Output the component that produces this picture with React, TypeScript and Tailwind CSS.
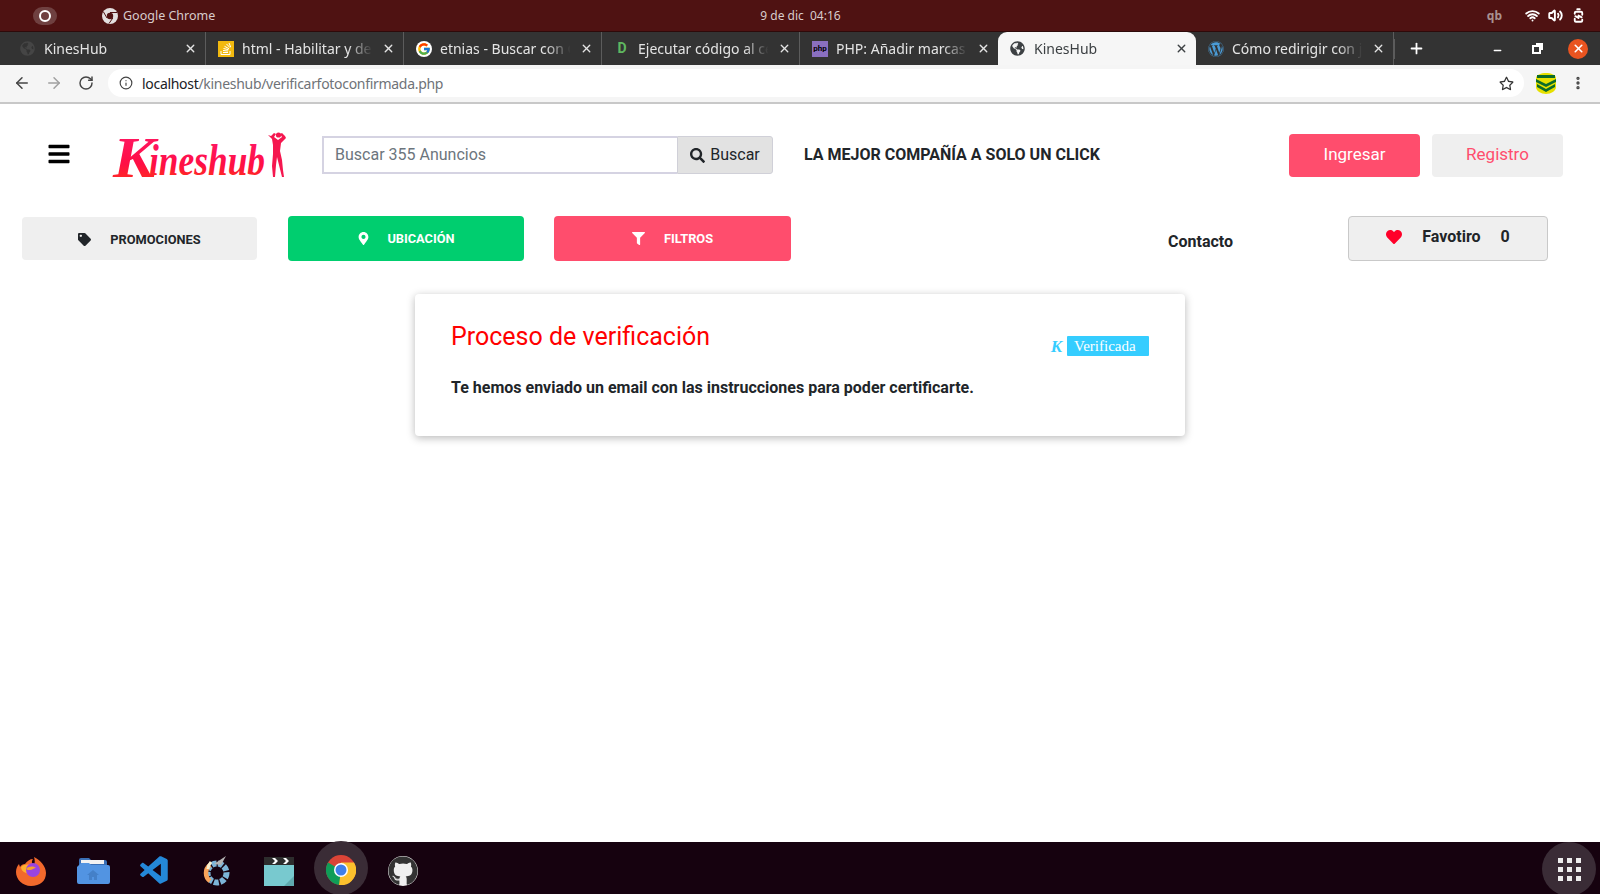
import React from "react";
import { FaBars, FaFilter, FaGlobeAmericas, FaHeart, FaMapMarkerAlt, FaSearch, FaTag, FaWordpress, FaGithub, FaRegStar } from "react-icons/fa";
import { FcGoogle } from "react-icons/fc";
import { VscVscode } from "react-icons/vsc";
import { ArrowLeft, ArrowRight, RotateCw, Info, X, Plus, Minus, EllipsisVertical, Volume2, Wifi, BatteryCharging } from "lucide-react";

const ubuntu = "font-['Noto_Sans',sans-serif]";

const tabs = [
  { title: "KinesHub", icon: <FaGlobeAmericas className="text-[15px] text-[#454545]" /> },
  { title: "html - Habilitar y desha", icon: <StackIcon /> },
  { title: "etnias - Buscar con Goo", icon: <span className="flex h-4 w-4 items-center justify-center rounded-full bg-white"><FcGoogle className="text-[14px]" /></span> },
  { title: "Ejecutar código al cerra", icon: <span className="w-4 text-center text-[14px] font-bold text-[#5fb760]">D</span> },
  { title: "PHP: Añadir marcas de a", icon: <span className="flex h-4 w-4 items-center justify-center bg-[#8a6fc0] text-[8px] font-bold text-black">php</span> },
  { title: "KinesHub", icon: <FaGlobeAmericas className="text-[15px] text-[#3c4043]" />, active: true },
  { title: "Cómo redirigir con jQue", icon: <FaWordpress className="text-[16px] text-[#4a9bd6]" /> },
];

function StackIcon() {
  return (
    <svg width="16" height="16" viewBox="0 0 16 16">
      <rect width="16" height="16" fill="#f2b90f" />
      <path d="M3 10v3.5h9V10M5 11.5h5M5 9.5l5 .5M5.5 7.5l5 1.2M6.5 5.3l4.5 2.4M8.5 3l3.5 3.6M11 2l1.7 4" stroke="#fff" strokeWidth="1" fill="none" />
    </svg>
  );
}

function Tab({ title, icon, active, last }: { title: string; icon: React.ReactNode; active?: boolean; last?: boolean }) {
  return (
    <div className={`flex h-[33px] w-[198px] shrink-0 items-center pl-[12px] pr-[8px] ${active ? "rounded-t-[9px] bg-[#f6f6f6] text-[#3c4043]" : "text-[#e4e4e4]"} ${active || last ? "" : "border-r border-[#5c5c5c]"}`}>
      <div className="flex w-[24px] shrink-0 items-center">{icon}</div>
      <span className={`${ubuntu} min-w-0 flex-1 overflow-hidden whitespace-nowrap text-[14px] [mask-image:linear-gradient(to_right,black_78%,transparent_96%)]`}>{title}</span>
      <X size={13} strokeWidth={2.5} className="ml-1 shrink-0" />
    </div>
  );
}

function Logo() {
  return (
    <svg width="178" height="52" viewBox="0 0 178 52" className="shrink-0">
      <defs>
        <linearGradient id="kh" x1="0" y1="0" x2="0" y2="1">
          <stop offset="0" stopColor="#ff1a6b" />
          <stop offset="0.6" stopColor="#ff0f45" />
          <stop offset="1" stopColor="#ff3a10" />
        </linearGradient>
      </defs>
      <text x="2" y="48" fill="url(#kh)" fontFamily="'Liberation Serif', serif" fontStyle="italic" fontWeight="700" fontSize="58" textLength="42" lengthAdjust="spacingAndGlyphs">K</text>
      <text x="0" y="0" transform="translate(38 46) scale(1 1.35)" fill="url(#kh)" fontFamily="'Liberation Serif', serif" fontStyle="italic" fontWeight="700" fontSize="33" textLength="116" lengthAdjust="spacingAndGlyphs">ineshub</text>
      <g fill="#f5174f">
        <path d="M160 7l3-3 2 1-2 3 4 3 4-3-2-3 2-1 3 3 1 2-5 5-1 8 2 9 1 10 1 7h-2l-3-12-2-8-1 8-1 12h-2l-1-11 1-12 0-9-1-6-4-4z" />
        <circle cx="167.500" cy="6" r="2.600" />
      </g>
    </svg>
  );
}

function Kmark() {
  return <span className="font-['Liberation_Serif',serif] text-[17px] font-bold italic leading-none text-[#35cdff]">K</span>;
}

function ChromeIcon() {
  return (
    <svg width="30" height="30" viewBox="0 0 30 30">
      <circle cx="15" cy="15" r="15" fill="#db4437" />
      <path d="M15 15L2 7.500A15 15 0 0 0 15 30l6-10z" fill="#0f9d58" />
      <path d="M15 15l-2 15a15 15 0 0 0 15-22.500H15z" fill="#fbc02d" />
      <circle cx="15" cy="15" r="7" fill="#fff" />
      <circle cx="15" cy="15" r="5.500" fill="#3f7fe8" />
    </svg>
  );
}

function FirefoxIcon() {
  return (
    <svg width="32" height="32" viewBox="0 0 32 32">
      <path d="M16 31C7.500 31 1 24.500 1 17c0-3 1-6 3-8l1 3c1-2 3-3 5-3 2-3 5-5 8-5-2 3-1 5 1 6 1-2 1-5 0-8 6 3 12 9 12 16 0 8-6 13-15 13z" fill="#f2692c" />
      <path d="M6 12c3-3 8-3 11-1-4 0-6 2-6 4 2 1 6-1 8 1-1 3-5 4-8 2-3-1-5-3-5-6z" fill="#ffb02e" />
      <circle cx="18" cy="15" r="7" fill="#9a44e0" />
      <path d="M11 14c3-3 7-3 10-1-2 0-4 2-6 2s-3 0-4-1z" fill="#f8a02c" />
    </svg>
  );
}

function FolderIcon() {
  return (
    <svg width="34" height="30" viewBox="0 0 34 30">
      <path d="M3 4a2 2 0 0 1 2-2h8l2 2h14a2 2 0 0 1 2 2v4H3z" fill="#3a6fb5" />
      <rect x="5" y="4" width="23" height="4" fill="#f2f2f2" />
      <path d="M2 10l3-3h8l2 2h17a2 2 0 0 1 2 2v15a2 2 0 0 1-2 2H3a2 2 0 0 1-2-2V11z" fill="#5294e2" />
      <path d="M17 14l-6 5h2v5h3v-3h2v3h3v-5h2z" fill="#4480c8" />
    </svg>
  );
}

function CogIcon() {
  return (
    <svg width="30" height="32" viewBox="0 0 30 32">
      <circle cx="15" cy="18" r="9.500" fill="none" stroke="#7cb5d8" strokeWidth="6" strokeDasharray="5 1.500" />
      <path d="M8 10a10 10 0 0 0 0 16" fill="none" stroke="#f9a45a" strokeWidth="4.500" />
      <path d="M9 7a11 11 0 0 0-3 7" fill="none" stroke="#f7f0d0" strokeWidth="3" />
      <path d="M12 9L24 1l-5 9z" fill="#b5b5b5" />
    </svg>
  );
}

function ClapperIcon() {
  return (
    <svg width="30" height="30" viewBox="0 0 30 30">
      <rect x="0" y="9" width="30" height="21" fill="#78c9cf" />
      <path d="M30 20v10H20z" fill="#5fa9ae" />
      <rect x="0" y="1" width="30" height="8" fill="#2d2d2d" />
      <path d="M8 2l3 3-3 3h3l3-3-3-3zM19 2l3 3-3 3h3l3-3-3-3z" fill="#fff" />
    </svg>
  );
}

function DockSlot({ children, active }: { children: React.ReactNode; active?: boolean }) {
  return (
    <div className="relative flex h-[52px] w-[62px] items-center justify-center">
      {active && <div className="absolute h-[54px] w-[54px] rounded-full bg-[#3a2c36]" />}
      <div className={`relative flex items-center justify-center ${active ? "mt-[4px]" : "mt-[5px]"}`}>{children}</div>
    </div>
  );
}

export default function App() {
  return (
    <div className="flex h-[894px] w-[1600px] flex-col overflow-hidden bg-white font-['Roboto',sans-serif] text-[#212529]">
      {/* ubuntu top bar */}
      <div className={`${ubuntu} flex h-[32px] shrink-0 items-center border-b border-[#2e0a0a] bg-[#4f1212] text-[12px] text-[#d8cccc]`}>
        <div className="ml-[33px] flex h-[18px] w-[24px] items-center justify-center rounded-full bg-[#6f4040]">
          <div className="h-[12px] w-[12px] rounded-full border-[2.5px] border-white" />
        </div>
        <svg width="16" height="16" viewBox="0 0 16 16" className="ml-[45px]">
          <circle cx="8" cy="8" r="8" fill="#e4e0e0" />
          <circle cx="8" cy="8" r="3.200" fill="#4f1212" />
          <path d="M8 4.500h7M5 10L1.500 4M10.800 10L7 15.500" stroke="#4f1212" strokeWidth="1" />
        </svg>
        <span className="ml-[5px] mt-[2px] text-[12.500px]">Google Chrome</span>
        <span className="ml-[545px] text-[12px]">9 de dic&nbsp;&nbsp;04:16</span>
        <div className="ml-auto mr-[14px] flex items-center gap-[8px] text-white">
          <span className="mr-[15px] text-[12px] font-bold text-[#a89090]">qb</span>
          <Wifi size={15} strokeWidth={3} />
          <Volume2 size={15} strokeWidth={3} />
          <BatteryCharging size={15} strokeWidth={3} className="-rotate-90" />
        </div>
      </div>

      {/* chrome tabs */}
      <div className="flex h-[33px] shrink-0 items-end bg-[#333333] pl-[8px]">
        {tabs.map((t, i) => (
          <Tab key={i} title={t.title} icon={t.icon} active={t.active} last={i === 4} />
        ))}
        <div className="h-[20px] self-center border-l border-[#5c5c5c]" />
        <Plus size={17} strokeWidth={2.5} className="ml-[13px] self-center text-white" />
        <Minus size={11} strokeWidth={3} className="ml-[67px] mt-[3px] self-center text-white" />
        <div className="relative ml-[29px] mt-[2px] h-[9px] w-[9px] self-center border-2 border-white">
          <div className="absolute -right-[4px] -top-[4px] h-[7px] w-[7px] border-r-2 border-t-2 border-white" />
        </div>
        <div className="ml-[27px] flex h-[20px] w-[20px] items-center justify-center self-center rounded-full bg-[#e95420] text-white">
          <X size={13} strokeWidth={3} />
        </div>
      </div>

      {/* address bar */}
      <div className="flex h-[39px] shrink-0 items-start border-b-2 border-[#c8c8c8] bg-[#f5f5f5] pt-[4px]">
        <ArrowLeft size={18} strokeWidth={2} className="ml-[13px] mt-[5px] text-[#444]" />
        <ArrowRight size={18} strokeWidth={2} className="ml-[14px] mt-[5px] text-[#a0a0a0]" />
        <RotateCw size={16} strokeWidth={2.2} className="ml-[15px] mt-[6px] text-[#444]" />
        <div className="ml-[14px] flex h-[28px] w-[1416px] items-center rounded-full bg-white pl-[11px]">
          <Info size={14} strokeWidth={2} className="text-[#444]" />
          <span className={`${ubuntu} ml-[9px] text-[14px] tracking-[-0.3px] text-[#202124]`}>
            localhost<span className="text-[#6f7378]">/kineshub/verificarfotoconfirmada.php</span>
          </span>
          <FaRegStar className="ml-auto mr-[10px] text-[15px] text-[#333]" />
        </div>
        <svg width="22" height="22" viewBox="0 0 22 22" className="ml-[11px] mt-[3px]">
          <path d="M1 6c0-3 5-5 10-5s10 2 10 5v9c0 4-5 7-10 7S1 19 1 15z" fill="#e6e000" />
          <path d="M2 3h18v3H2zM1 7l10 5 10-5v3l-10 5-10-5zM2 12l9 5 9-5v3l-9 5-9-5z" fill="#0c6b2a" />
        </svg>
        <EllipsisVertical size={16} strokeWidth={3} className="ml-[13px] mt-[6px] text-[#444]" />
      </div>

      {/* page */}
      <div className="flex-1 overflow-hidden">
        <div className="flex h-[29px]" />
        <div className="flex h-[44px] items-center">
          <FaBars className="mb-[2px] ml-[47px] text-[24px] text-black" />
          <div className="ml-[40px]"><Logo /></div>
          <div className="ml-[33px] flex h-[38px] w-[451px]">
            <div className="flex flex-1 items-center border-2 border-r-0 border-[#d5d3e2] pl-[11px] text-[16px] text-[#6c757d]">Buscar 355 Anuncios</div>
            <div className="flex w-[96px] items-center justify-center gap-[5px] rounded-r-[3px] border border-[#d0d0d8] bg-[#e2e2e2] text-[16px]">
              <FaSearch className="text-[15px]" /> Buscar
            </div>
          </div>
          <span className="ml-[31px] text-[16px] font-bold">LA MEJOR COMPAÑÍA A SOLO UN CLICK</span>
          <div className="ml-auto mr-[37px] flex gap-[12px]">
            <div className="flex h-[43px] w-[131px] items-center justify-center rounded-[4px] bg-[#ff4d6d] text-[17px] text-white">Ingresar</div>
            <div className="flex h-[43px] w-[131px] items-center justify-center rounded-[4px] bg-[#efefef] text-[17px] text-[#ff4d6d]">Registro</div>
          </div>
        </div>

        <div className="mt-[39px] flex h-[45px] items-center">
          <div className="ml-[22px] flex h-[43px] w-[235px] items-center justify-center rounded-[4px] bg-[#efefef] pt-[2px] text-[12.800px] font-bold">
            <FaTag className="mr-[19px] text-[13px] text-[#212529]" /> PROMOCIONES
          </div>
          <div className="ml-[31px] flex h-[45px] w-[236px] items-center justify-center rounded-[4px] bg-[#00ce6f] text-[12.800px] font-bold text-white">
            <FaMapMarkerAlt className="mr-[17px] text-[13px]" /> UBICACIÓN
          </div>
          <div className="ml-[30px] flex h-[45px] w-[237px] items-center justify-center rounded-[4px] bg-[#ff4d6d] text-[12.800px] font-bold text-white">
            <FaFilter className="mr-[19px] text-[13px]" /> FILTROS
          </div>
          <span className="ml-[377px] mt-[6px] text-[16px] font-bold">Contacto</span>
          <div className="ml-[115px] flex h-[45px] w-[200px] items-center justify-center rounded-[4px] border border-[#c9c9c9] bg-[#efefef] pb-[3px] text-[16px] font-bold">
            <FaHeart className="mr-[20px] text-[16px] text-[#ff0029]" /> Favotiro <span className="ml-[20px]">0</span>
          </div>
        </div>

        <div className="ml-[415px] mt-[33px] h-[142px] w-[770px] rounded-[4px] bg-white px-[36px] pt-[25px] shadow-[0_2px_8px_rgba(0,0,0,0.28)]">
          <div className="flex items-start justify-between">
            <h2 className="text-[25px] leading-[36px] text-[#ff0000]">Proceso de verificación</h2>
            <div className="mt-[17px] flex items-center gap-[5px]">
              <Kmark />
              <span className="flex h-[20px] w-[82px] items-center rounded-[1px] bg-[#35cdff] pl-[7px] font-['Liberation_Serif',serif] text-[15px] text-white">Verificada</span>
            </div>
          </div>
          <p className="mt-[20px] text-[16px] font-bold">Te hemos enviado un email con las instrucciones para poder certificarte.</p>
        </div>
      </div>

      {/* dock */}
      <div className="flex h-[52px] shrink-0 items-center bg-[#16020f]">
        <DockSlot><FirefoxIcon /></DockSlot>
        <DockSlot><FolderIcon /></DockSlot>
        <DockSlot><VscVscode className="text-[34px] text-[#2488d8]" /></DockSlot>
        <DockSlot><CogIcon /></DockSlot>
        <DockSlot><ClapperIcon /></DockSlot>
        <DockSlot active><ChromeIcon /></DockSlot>
        <DockSlot>
          <span className="flex h-[30px] w-[30px] items-center justify-center rounded-full bg-[#efefef]"><FaGithub className="text-[30px] text-[#333]" /></span>
        </DockSlot>
        <div className="relative ml-auto mr-[4px] mt-[2px] flex h-[54px] w-[54px] items-center justify-center rounded-full bg-[#3a2c36]">
          <div className="grid grid-cols-3 gap-[4px]">
            {Array.from({ length: 9 }).map((_, i) => (
              <div key={i} className="h-[5px] w-[5px] bg-[#eeeeee]" />
            ))}
          </div>
        </div>
      </div>
    </div>
  );
}
